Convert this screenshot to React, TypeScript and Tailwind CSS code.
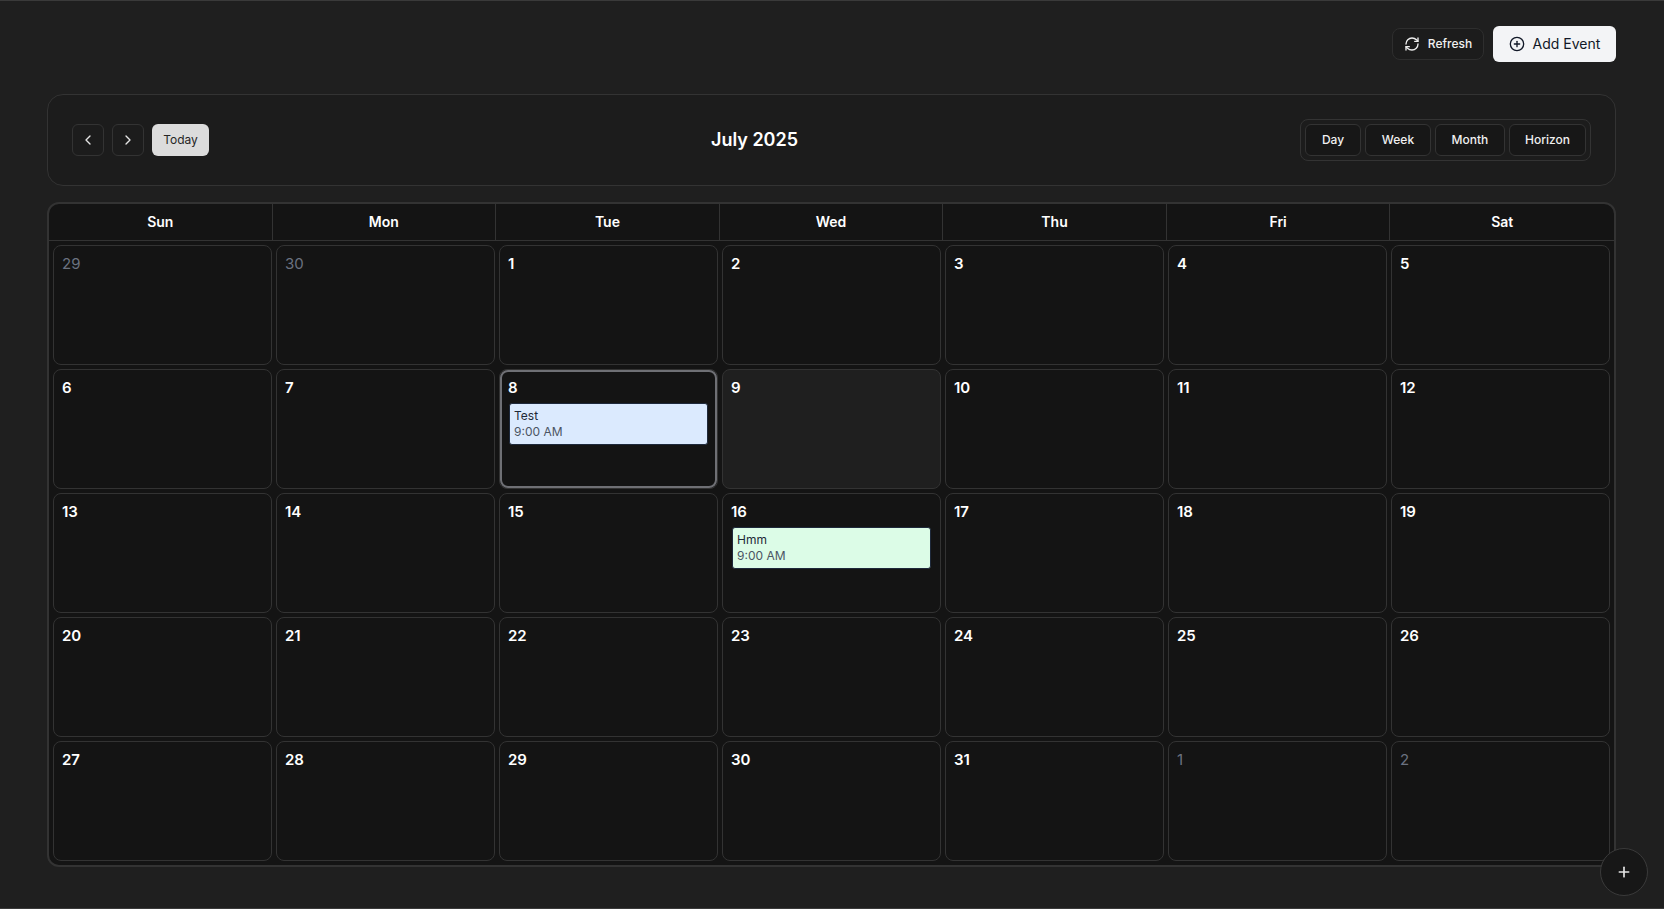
import { ChevronLeft, ChevronRight, CirclePlus, Plus, RefreshCw } from "lucide-react";

type Cell = { d: number; muted?: boolean; today?: boolean; hover?: boolean; ev?: "blue" | "green" };

const cells: Cell[] = [
  { d: 29, muted: true }, { d: 30, muted: true },
  ...Array.from({ length: 31 }, (_, i): Cell => {
    const d = i + 1;
    if (d === 8) return { d, today: true, ev: "blue" };
    if (d === 9) return { d, hover: true };
    if (d === 16) return { d, ev: "green" };
    return { d };
  }),
  { d: 1, muted: true }, { d: 2, muted: true },
];

const days = ["Sun", "Mon", "Tue", "Wed", "Thu", "Fri", "Sat"];

function Event({ kind }: { kind: "blue" | "green" }) {
  const title = kind === "blue" ? "Test" : "Hmm";
  return (
    <div
      className={
        "mt-[5px] ml-[1px] mr-[2px] h-[42px] rounded-[3px] border border-[#1e293b] px-1 pt-1 text-xs leading-4 " +
        (kind === "blue" ? "bg-[#dbeafe]" : "bg-[#dcfce7]")
      }
    >
      <div className="text-[#1f2937]">{title}</div>
      <div className="text-[#4b5563]">9:00 AM</div>
    </div>
  );
}

function DayCell({ c }: { c: Cell }) {
  return (
    <div
      className={
        "relative h-[120px] rounded-lg border border-[#333333] pl-2 pr-[7px] pt-2 " +
        (c.hover ? "bg-[#1f1f1f]" : "bg-[#141414]")
      }
    >
      {c.today && <div className="pointer-events-none absolute inset-0 rounded-lg border-2 border-[#6f7075]" />}
      <div className={"h-5 text-[15px] leading-5 " + (c.muted ? "font-normal text-[#6b7280]" : "font-semibold text-white")}>
        {c.d}
      </div>
      {c.ev && <Event kind={c.ev} />}
    </div>
  );
}

export default function App() {
  return (
    <div className="relative h-[909px] w-[1664px] overflow-hidden border-y border-[#3a3a3a] bg-[#1f1f1f] pl-[47px] pr-[48px] font-['Inter',sans-serif]">
      <div className="flex h-[93px] items-start justify-end gap-[9px] pt-[25px]">
        <button className="mt-[2px] flex h-8 w-[92px] items-center justify-center gap-2 rounded-lg border border-[#2e2e2e] bg-[#1c1c1c] text-xs font-medium text-[#f0f0f0]">
          <RefreshCw size={16} strokeWidth={2} />
          Refresh
        </button>
        <button className="flex h-9 w-[123px] items-center justify-center gap-2 rounded-md bg-[#f3f4f6] text-sm font-normal text-[#111827]">
          <CirclePlus size={16} strokeWidth={2} />
          Add Event
        </button>
      </div>

      <div className="flex h-[92px] items-center justify-between rounded-2xl border border-[#333333] bg-[#1c1c1c] px-6">
        <div className="flex gap-2">
          <button className="flex h-8 w-8 items-center justify-center rounded-md border border-[#333333] bg-[#1c1c1c] text-[#e5e5e5]">
            <ChevronLeft size={16} />
          </button>
          <button className="flex h-8 w-8 items-center justify-center rounded-md border border-[#333333] bg-[#1c1c1c] text-[#e5e5e5]">
            <ChevronRight size={16} />
          </button>
          <button className="h-8 w-[57px] rounded-md bg-[#dcdcdc] text-xs font-normal text-[#262626]">Today</button>
        </div>
        <div className="text-lg font-semibold text-white">July 2025</div>
        <div className="flex gap-1 rounded-lg border border-[#333333] p-1">
          {[
            ["Day", "w-[56px]"],
            ["Week", "w-[66px]"],
            ["Month", "w-[70px]"],
            ["Horizon", "w-[77px]"],
          ].map(([t, w]) => (
            <button key={t} className={w + " h-8 rounded-md border border-[#333333] bg-[#171717] text-xs font-medium text-[#f0f0f0]"}>
              {t}
            </button>
          ))}
        </div>
      </div>

      <div className="mt-4 overflow-hidden rounded-xl border-2 border-[#333333] bg-[#141414]">
        <div className="grid h-[37px] grid-cols-7 border-b border-[#333333]">
          {days.map((d, i) => (
            <div
              key={d}
              className={"flex items-center justify-center text-sm font-semibold text-white " + (i < 6 ? "border-r border-[#333333]" : "")}
            >
              {d}
            </div>
          ))}
        </div>
        <div className="grid grid-cols-7 gap-1 p-1">
          {cells.map((c, i) => (
            <DayCell key={i} c={c} />
          ))}
        </div>
      </div>

      <button className="absolute left-[1600px] top-[847px] flex h-12 w-12 items-center justify-center rounded-full border border-[#3a3a3a] bg-[#171717] text-[#e5e5e5]">
        <Plus size={16} strokeWidth={2.5} />
      </button>
    </div>
  );
}
